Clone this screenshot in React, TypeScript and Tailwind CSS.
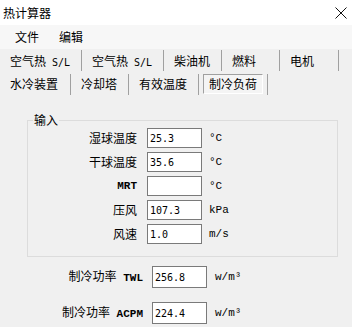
import React from 'react';

const cjk = { fontFamily: '"Noto Sans CJK SC", "Noto Sans", sans-serif' };
const mono = { fontFamily: '"DejaVu Sans Mono", monospace' };
const serifMono = { fontFamily: '"Liberation Mono", monospace' };

const row1 = [
    { label: '空气热', suffix: ' S/L', w: 'w-[82px]' },
    { label: '空气热', suffix: ' S/L', w: 'w-[82px]' },
    { label: '柴油机', w: 'w-[58px]' },
    { label: '燃料', w: 'w-[58px]' },
    { label: '电机', w: 'w-[59px]' },
];

const row2 = [
    { label: '水冷装置', w: 'w-[71px]' },
    { label: '冷却塔', w: 'w-[58px]' },
    { label: '有效温度', w: 'w-[70px]' },
    { label: '制冷负荷', w: 'w-[69px]', active: true },
];

const inputs = [
    { label: '湿球温度', value: '25.3', unit: '°C' },
    { label: '干球温度', value: '35.6', unit: '°C' },
    { label: 'MRT', value: '', unit: '°C', latin: true },
    { label: '压风', value: '107.3', unit: 'kPa' },
    { label: '风速', value: '1.0', unit: 'm/s' },
];

const outputs = [
    { label: '制冷功率', code: 'TWL', value: '256.8' },
    { label: '制冷功率', code: 'ACPM', value: '224.4' },
];

const App: React.FC = () => {
    return (
        <div className="w-[352px] h-[327px] bg-[#f0f0f0] overflow-hidden text-black text-[12px]" style={cjk}>
            {/* Title bar */}
            <div className="h-[25px] bg-white flex items-center justify-between pl-[3px] pr-[5px]">
                <span className="leading-none">热计算器</span>
                <svg width="12" height="12" viewBox="0 0 12 12" className="mt-[1px]">
                    <path d="M0.5 0.5 L11.5 11.5 M11.5 0.5 L0.5 11.5" stroke="#111" strokeWidth="1" />
                </svg>
            </div>

            {/* Menu */}
            <div className="h-[24px] bg-[#f7f7f7] flex items-center pl-[15px] gap-[20px]">
                <span>文件</span>
                <span>编辑</span>
            </div>

            {/* Tabs */}
            <div className="h-[23px] flex items-center">
                {row1.map((t, i) => (
                    <div key={i} className={`${t.w} h-full flex items-center`}>
                        <div className="flex-1 pl-[10px] whitespace-pre">
                            {t.label}
                            {t.suffix && <span className="text-[10px]" style={mono}>{t.suffix}</span>}
                        </div>
                        <div className="w-px h-[21px] bg-[#a0a0a0]" />
                    </div>
                ))}
            </div>
            <div className="h-[24px] flex items-center">
                {row2.map((t, i) => (
                    <div key={i} className={`${t.w} h-full flex items-center`}>
                        {t.active ? (
                            <div className="flex-1 flex items-center">
                                <div className="ml-[4px] w-[60px] h-[20px] flex items-center pl-[5px] border border-t-[#a0a0a0] border-l-[#a0a0a0] border-b-white border-r-white bg-[#f4f4f4]">
                                    {t.label}
                                </div>
                            </div>
                        ) : (
                            <div className="flex-1 pl-[10px]">{t.label}</div>
                        )}
                        <div className="w-px h-[21px] bg-[#a0a0a0]" />
                    </div>
                ))}
            </div>

            {/* Input group */}
            <div className="relative ml-[27px] mt-[24px] w-[311px] border border-[#dcdcdc] pt-[7px] pb-[12px]">
                <span className="absolute left-[5px] -top-[9px] px-[1px] bg-[#f0f0f0] leading-[16px]">输入</span>
                <div className="flex flex-col gap-[4px]">
                    {inputs.map((r, i) => (
                        <div key={i} className="flex items-center h-[20px]">
                            <div
                                className={`w-[109px] text-right ${r.latin ? 'text-[11px] font-bold' : ''}`}
                                style={r.latin ? serifMono : undefined}
                            >
                                {r.label}
                            </div>
                            <div
                                className="ml-[10px] w-[55px] h-[20px] bg-white border border-[#7a7a7a] flex items-center pl-[2px] text-[10px]"
                                style={mono}
                            >
                                {r.value}
                            </div>
                            <div className="ml-[7px] text-[11px]" style={serifMono}>
                                {r.unit}
                            </div>
                        </div>
                    ))}
                </div>
            </div>

            {/* Outputs */}
            <div className="mt-[9px] flex flex-col gap-[14px]">
                {outputs.map((r, i) => (
                    <div key={i} className="flex items-center h-[22px]">
                        <div className="w-[143px] text-right whitespace-pre">
                            {r.label}
                            <span className="text-[11px] font-bold" style={serifMono}>{' ' + r.code}</span>
                        </div>
                        <div
                            className="ml-[9px] w-[55px] h-[22px] bg-white border border-[#7a7a7a] flex items-center pl-[2px] text-[10px]"
                            style={mono}
                        >
                            {r.value}
                        </div>
                        <div className="ml-[8px] text-[11px]" style={serifMono}>
                            w/m³
                        </div>
                    </div>
                ))}
            </div>
        </div>
    );
};

export default App;
